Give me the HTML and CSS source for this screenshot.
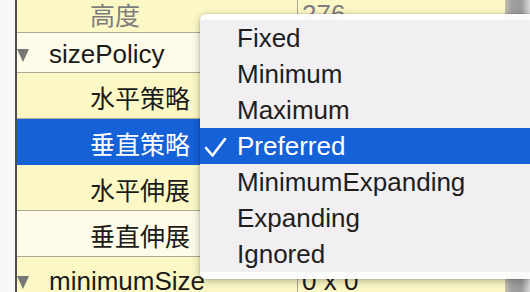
FILE: index.html
```html
<!DOCTYPE html>
<html lang="zh-CN">
<head>
    <meta charset="UTF-8">
    <meta name="viewport" content="width=device-width, initial-scale=1.0">
    <title>Property Editor</title>
    <link rel="stylesheet" href="styles.css">
</head>
<body>
    <div class="editor">
        <div class="gutter"></div>

        <div class="table">
            <div class="row yellow first dim">
                <div class="name child"><span class="cjk">高度</span></div>
                <div class="value">276</div>
            </div>
            <div class="row light short">
                <div class="name"><span class="arrow"></span>sizePolicy</div>
                <div class="value faint">[Preferred, Fixed, 0, 0]</div>
            </div>
            <div class="row yellow">
                <div class="name child"><span class="cjk">水平策略</span></div>
                <div class="value sub faint">Preferred</div>
            </div>
            <div class="row selected">
                <div class="name child"><span class="cjk">垂直策略</span></div>
                <div class="value"></div>
            </div>
            <div class="row yellow">
                <div class="name child"><span class="cjk">水平伸展</span></div>
                <div class="value"></div>
            </div>
            <div class="row light">
                <div class="name child"><span class="cjk">垂直伸展</span></div>
                <div class="value"></div>
            </div>
            <div class="row yellow">
                <div class="name"><span class="arrow"></span>minimumSize</div>
                <div class="value">0 x 0</div>
            </div>
        </div>

        <div class="scroll"></div>

        <div class="menu">
            <ul class="menu-list">
                <li class="menu-item">Fixed</li>
                <li class="menu-item">Minimum</li>
                <li class="menu-item">Maximum</li>
                <li class="menu-item active">
                    <svg class="check" width="24" height="36" viewBox="0 0 24 36">
                        <path d="M2 20 L8.5 27.5 L21 11" fill="none" stroke="#fff" stroke-width="2.6" stroke-linecap="round" stroke-linejoin="round"/>
                    </svg>
                    Preferred
                </li>
                <li class="menu-item">MinimumExpanding</li>
                <li class="menu-item">Expanding</li>
                <li class="menu-item">Ignored</li>
            </ul>
        </div>
    </div>
</body>
</html>
```
FILE: styles.css
```css
body {
    margin: 0;
    padding: 0;
    font-family: "Liberation Sans", Arial, "Noto Sans CJK SC", sans-serif;
    background-color: #fafafa;
}

.editor {
    position: relative;
    display: flex;
    width: 530px;
    height: 292px;
    overflow: hidden;
}

.gutter {
    width: 15px;
    background-color: #f7f7f7;
}

.table {
    width: 488px;
    border-left: 2px solid #4d4d4d;
    display: flex;
    flex-direction: column;
}

.row {
    display: grid;
    grid-template-columns: 281px 1fr;
    height: 45px;
    flex-shrink: 0;
    border-bottom: 1px solid #aba893;
    font-size: 26px;
    color: #1b1b1b;
}

.row.first {
    height: 32px;
}

.row.short {
    height: 39px;
}

.row.yellow {
    background-color: #fcf8c5;
}

.row.light {
    background-color: #fefce8;
}

.row.selected {
    background-color: #1561d8;
    color: #fff;
    border-bottom-color: #1561d8;
}

.row.dim {
    color: #7d7d7d;
}

.name {
    display: flex;
    align-items: center;
    padding-top: 3px;
    border-right: 1px solid #aba893;
    white-space: nowrap;
}

.row.first .name,
.row.first .value {
    padding-top: 0;
    padding-bottom: 3px;
}

.row.selected .name {
    border-right-color: #1561d8;
}

.name.child {
    padding-left: 73px;
}

.cjk {
    font-family: "Noto Sans CJK SC", sans-serif;
    font-size: 25px;
    line-height: 1;
}

.arrow {
    width: 0;
    height: 0;
    border-left: 6.5px solid transparent;
    border-right: 6.5px solid transparent;
    border-top: 13px solid #767676;
    margin-right: 20px;
    margin-top: 2px;
}

.value {
    display: flex;
    align-items: center;
    padding-top: 3px;
    padding-left: 4px;
    white-space: nowrap;
    overflow: hidden;
}

.value.sub {
    padding-left: 58px;
}

.value.faint {
    color: #555;
}

.scroll {
    flex: 1;
    background: linear-gradient(to right, #c4c2ad, #a2a2a2 25%, #9a9a9a 65%, #d9d9d9);
}

/* popup list that lies over the table */
.menu {
    position: absolute;
    left: 200px;
    top: 14px;
    width: 330px;
    height: 265px;
    box-sizing: border-box;
    padding: 6px 0 7px;
    background-color: rgba(253, 253, 253, 0.97);
    border-radius: 6px 0 0 6px;
    box-shadow: 0 2px 9px rgba(0, 0, 0, 0.28), 0 0 0 0.5px rgba(0, 0, 0, 0.12);
}

.menu-list {
    list-style: none;
    margin: 0;
    padding: 0;
    background-color: rgba(240, 238, 240, 0.94);
}

.menu-item {
    position: relative;
    height: 36px;
    line-height: 36px;
    padding-left: 37px;
    font-size: 26px;
    color: #1e1e1e;
}

.menu-item.active {
    background-color: #1561d8;
    color: #fff;
}

.menu-item .check {
    position: absolute;
    left: 4px;
    top: 0;
}
```
